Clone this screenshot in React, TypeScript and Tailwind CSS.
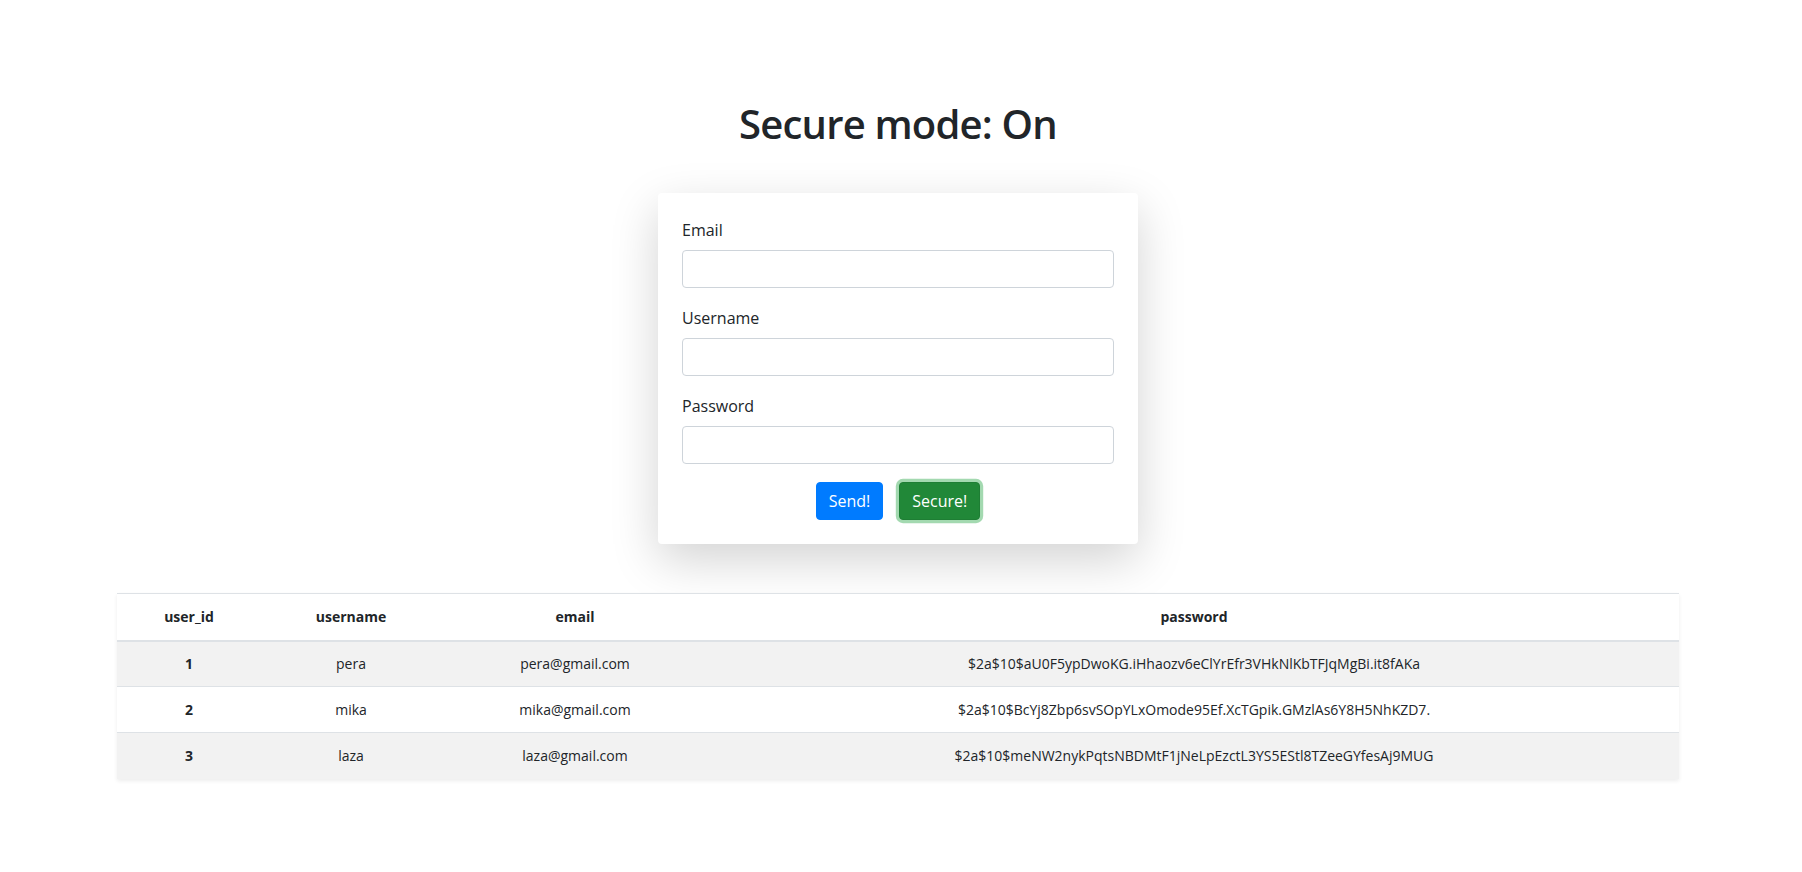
import React from "react";

const rows = [
  { id: 1, username: "pera", email: "pera@gmail.com", password: "$2a$10$aU0F5ypDwoKG.iHhaozv6eClYrEfr3VHkNlKbTFJqMgBi.it8fAKa" },
  { id: 2, username: "mika", email: "mika@gmail.com", password: "$2a$10$BcYj8Zbp6svSOpYLxOmode95Ef.XcTGpik.GMzlAs6Y8H5NhKZD7." },
  { id: 3, username: "laza", email: "laza@gmail.com", password: "$2a$10$meNW2nykPqtsNBDMtF1jNeLpEzctL3YS5EStl8TZeeGYfesAj9MUG" },
];

function Field({ label, type }: { label: string; type: string }) {
  return (
    <div className="mb-[18px]">
      <label className="block h-6 leading-6 mb-2 text-[16px] text-[#212529]">{label}</label>
      <input
        type={type}
        className="block w-full h-[38px] rounded border border-[#ced4da] bg-white px-3 outline-none"
      />
    </div>
  );
}

export default function App() {
  return (
    <div
      className="min-h-screen bg-white text-[#212529] pt-[100px] pb-10 pr-[6px]"
      style={{ fontFamily: '"Open Sans", "Noto Sans", sans-serif' }}
    >
      <h1 className="text-center text-[40px] leading-[48px] h-12 font-semibold mb-[45px] tracking-[-0.8px]">
        Secure mode: On
      </h1>

      <div className="mx-auto w-[480px] bg-white rounded pt-[25px] pb-6 px-6 shadow-[0_1rem_3rem_rgba(0,0,0,0.175)]">
        <Field label="Email" type="email" />
        <Field label="Username" type="text" />
        <Field label="Password" type="password" />
        <div className="flex justify-center gap-4">
          <button className="h-[38px] px-3 rounded bg-[#007bff] border border-[#007bff] text-white text-[16px] leading-6">
            Send!
          </button>
          <button className="h-[38px] px-3 rounded bg-[#218838] border border-[#1e7e34] text-white text-[16px] leading-6 shadow-[0_0_0_0.2rem_rgba(72,180,97,0.5)]">
            Secure!
          </button>
        </div>
      </div>

      <div className="mt-[49px] mx-auto w-[1562px] shadow-[0_0.125rem_0.25rem_rgba(0,0,0,0.075)]">
        <table className="w-full border-collapse text-[14px] text-center">
          <colgroup>
            <col className="w-[144px]" />
            <col className="w-[180px]" />
            <col className="w-[268px]" />
            <col />
          </colgroup>
          <thead>
            <tr className="bg-white">
              <th className="h-[47px] border-t border-[#dee2e6] border-b-2 font-bold p-0">user_id</th>
              <th className="h-[47px] border-t border-[#dee2e6] border-b-2 font-bold p-0">username</th>
              <th className="h-[47px] border-t border-[#dee2e6] border-b-2 font-bold p-0">email</th>
              <th className="h-[47px] border-t border-[#dee2e6] border-b-2 font-bold p-0">password</th>
            </tr>
          </thead>
          <tbody>
            {rows.map((r, i) => (
              <tr key={r.id} className={i % 2 === 0 ? "bg-[#f2f2f2]" : "bg-white"}>
                <td className={`h-[46px] p-0 font-bold ${i > 0 ? "border-t border-[#dee2e6]" : ""}`}>{r.id}</td>
                <td className={`h-[46px] p-0 ${i > 0 ? "border-t border-[#dee2e6]" : ""}`}>{r.username}</td>
                <td className={`h-[46px] p-0 ${i > 0 ? "border-t border-[#dee2e6]" : ""}`}>{r.email}</td>
                <td className={`h-[46px] p-0 ${i > 0 ? "border-t border-[#dee2e6]" : ""}`}>{r.password}</td>
              </tr>
            ))}
          </tbody>
        </table>
      </div>
    </div>
  );
}
